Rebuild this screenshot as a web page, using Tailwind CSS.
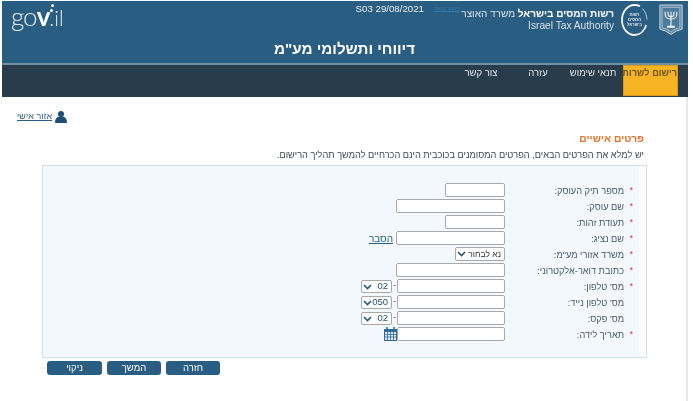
<!doctype html>
<html dir="rtl" lang="he">
  <head>
    <title>דיווחי ותשלומי מע"מ</title>
    <meta charset="UTF-8" />
    <script src="https://cdn.jsdelivr.net/npm/@tailwindcss/browser@4"></script>
  </head>
  <body class="bg-white font-['Liberation_Sans',Arial,sans-serif] text-[9.2px] text-[#4b5a68]">
    <div class="w-[686px] ml-auto mr-[5px] pt-px h-[401px] overflow-hidden blur-[0.35px]">
      <!-- header -->
      <header class="h-[64px] bg-[#2a5d82] border-b-2 border-[#6f8fa6] text-white">
        <div class="flex items-start h-[39px] pr-[5px] pt-[3px]">
          <svg class="w-[24px] h-[31px] shrink-0" viewBox="0 0 24 32" fill="none" stroke="#c4d1db" stroke-width="1">
            <path d="M.5 1h23v25l-6 2-5.500 3.500L6.500 28l-6-2z" fill="#6b91ab" />
            <path d="M3 3.500h18v21l-5 1.500-4 2.500L8 26l-5-1.500z" stroke="#a9bdcb" stroke-width="0.800" fill="#4d7b9a" />
            <path d="M12 8v15M6 8v3c0 3 3 4.500 6 4.500s6-1.500 6-4.500V8M9 8v3c0 1.500 1 2 3 2s3-.500 3-2V8" stroke="#f4f7f9" stroke-width="1.100" />
            <path d="M8 23.500h8" stroke="#f4f7f9" stroke-width="2" />
          </svg>
          <svg class="w-[27px] h-[32px] mr-[11px] shrink-0" viewBox="0 0 27 32" fill="none">
            <path d="M19 2.200C17.500 1.400 15.500 1 13.500 1 6.600 1 1 7.700 1 16s5.600 15 12.500 15c5.500 0 10-4.200 11.800-10" stroke="#f4f7f9" stroke-width="1.800" />
            <path d="M21.500 4.500c2.500 2.700 4.300 6.500 4.500 11" stroke="#b5c8d5" stroke-width="1" />
            <g fill="#dce6ec" font-size="4.200" text-anchor="middle" font-family="Liberation Sans" font-weight="700">
              <text x="13.500" y="12">רשות</text>
              <text x="13.500" y="17">המסים</text>
              <text x="13.500" y="22">בישראל</text>
            </g>
          </svg>
          <div class="mr-[7px] w-[144px] shrink-0 pt-[4px] text-[10px] leading-[12px] whitespace-nowrap">
            <p><span class="font-bold">רשות המסים בישראל</span> <span class="text-[#d6e1e9]">משרד האוצר</span></p>
            <p class="text-[#d6e1e9] text-[10.200px] text-right" dir="ltr">Israel Tax Authority</p>
          </div>
          <div class="mr-[10px] flex items-center h-[9px] whitespace-nowrap pt-[1px]">
            <span class="text-[5px] text-[#2f78b0] underline w-[36px]">נתוניך קישור</span>
            <span class="text-[9.700px] text-[#e8eff4]" dir="ltr">S03 29/08/2021</span>
          </div>
          <div class="mr-auto pl-[9px] flex items-start h-[31px] text-[#e4ecf1] font-['Lato',sans-serif] font-light text-[26px] leading-[24px] relative tracking-[-1px]" dir="ltr">
            <span>go<span class="font-bold text-white">v</span><span class="text-[21px] tracking-[0px]">.il</span></span>
            <span class="absolute left-[49px] top-[0px] w-[3px] h-[3px] rounded-full bg-white"></span>
            <span class="absolute left-[48px] top-[5px] w-[3px] h-[3px] rounded-full bg-white"></span>
          </div>
        </div>
        <h1 class="text-center text-[15.200px] leading-[18px] font-bold pr-[1px]">דיווחי ותשלומי מע"מ</h1>
      </header>

      <!-- menu -->
      <nav class="h-[32px] bg-[#283c4c] flex pr-[10px] text-[9.500px] text-[#dfe6eb] leading-[14px]">
        <a class="w-[55px] h-[31px] bg-[#f6b324] border border-[#d89b1c] text-center font-bold text-[9.200px] text-[#6d5212] whitespace-nowrap">רישום לשרות</a>
        <a class="w-[60px] text-center pt-px">תנאי שימוש</a>
        <a class="w-[50px] text-center pt-px">עזרה</a>
        <a class="w-[64px] text-center pt-px">צור קשר</a>
      </nav>

      <!-- content -->
      <main class="h-[304px] border-r-2 border-[#e6e7e8]">
        <div class="flex justify-end items-center pl-[15px] pt-[13px] gap-[3px] h-[26px]">
          <svg class="w-[12px] h-[12px]" viewBox="0 0 12 12" fill="#1f4f75">
            <circle cx="6" cy="3" r="3" />
            <path d="M0 12c0-4 1.500-6 4-6.500h4C10.500 6 12 8 12 12z" />
          </svg>
          <a class="text-[9px] text-[#2a5d82] underline leading-none">אזור אישי</a>
        </div>
        <h2 class="mt-[9px] pr-[42px] text-[10.300px] leading-[14px] font-bold text-[#e2752c]">פרטים אישיים</h2>
        <p class="mt-[2px] pr-[42px] text-[9.200px] leading-[14px] text-[#3f4a54]">יש למלא את הפרטים הבאים, הפרטים המסומנים בכוכבית הינם הכרחיים להמשך תהליך הרישום.</p>

        <section class="mt-[3px] mr-[39px] w-[605px] h-[193px] border border-[#cfdff0] bg-[#fafcff] pr-[7px]">
          <div class="h-full bg-[#f3f8fe] pt-[16px]">
            <div class="flex items-center h-[16px]">
              <span class="w-[10px] pr-[6px] pt-[2px] text-[#e2343a] text-[9px]">*</span>
              <label class="w-[124px] pr-[5px] pt-[3px]">מספר תיק העוסק:</label>
              <input class="w-[60px] h-[14px] bg-white border border-[#a8a8a8] rounded-[2px]" />
            </div>
            <div class="flex items-center h-[16px]">
              <span class="w-[10px] pr-[6px] pt-[2px] text-[#e2343a] text-[9px]">*</span>
              <label class="w-[124px] pr-[5px] pt-[3px]">שם עוסק:</label>
              <input class="w-[109px] h-[14px] bg-white border border-[#a8a8a8] rounded-[2px]" />
            </div>
            <div class="flex items-center h-[16px]">
              <span class="w-[10px] pr-[6px] pt-[2px] text-[#e2343a] text-[9px]">*</span>
              <label class="w-[124px] pr-[5px] pt-[3px]">תעודת זהות:</label>
              <input class="w-[60px] h-[14px] bg-white border border-[#a8a8a8] rounded-[2px]" />
            </div>
            <div class="flex items-center h-[16px]">
              <span class="w-[10px] pr-[6px] pt-[2px] text-[#e2343a] text-[9px]">*</span>
              <label class="w-[124px] pr-[5px] pt-[3px]">שם נציג:</label>
              <input class="w-[109px] h-[14px] bg-white border border-[#a8a8a8] rounded-[2px]" />
              <a class="mr-[3px] text-[10px] text-[#2a5d82] underline">הסבר</a>
            </div>
            <div class="flex items-center h-[16px]">
              <span class="w-[10px] pr-[6px] pt-[2px] text-[#e2343a] text-[9px]">*</span>
              <label class="w-[124px] pr-[5px] pt-[3px]">משרד אזורי מע"מ:</label>
              <div class="relative w-[50px] h-[14px]">
                <select class="appearance-none w-full h-full bg-white border border-[#a8a8a8] rounded-[2px] pr-[3px] text-[8.500px] leading-none text-[#333]"><option>נא לבחור</option></select>
                <svg class="absolute left-[2px] top-[4px] w-[9px] h-[6px]" viewBox="0 0 9 6" fill="none" stroke="#24557a" stroke-width="1.600"><path d="M1 1l3.500 3.500L8 1" /></svg>
              </div>
            </div>
            <div class="flex items-center h-[16px]">
              <span class="w-[10px] pr-[6px] pt-[2px] text-[#e2343a] text-[9px]">*</span>
              <label class="w-[124px] pr-[5px] pt-[3px]">כתובת דואר-אלקטרוני:</label>
              <input class="w-[109px] h-[14px] bg-white border border-[#a8a8a8] rounded-[2px]" />
            </div>
            <div class="flex items-center h-[16px]">
              <span class="w-[10px] pr-[6px] pt-[2px] text-[#e2343a] text-[9px]">*</span>
              <label class="w-[124px] pr-[5px] pt-[3px]">מס' טלפון:</label>
              <input class="w-[108px] h-[14px] bg-white border border-[#a8a8a8] rounded-[2px]" />
              <span class="w-[5px] text-center leading-none">-</span>
              <div class="relative w-[31px] h-[13px]">
                <select class="appearance-none w-full h-full bg-white border border-[#a8a8a8] rounded-[2px] pr-[3px] text-[9.500px] leading-none text-[#24557a]"><option>02</option></select>
                <svg class="absolute left-[2px] top-[4px] w-[9px] h-[6px]" viewBox="0 0 9 6" fill="none" stroke="#24557a" stroke-width="1.600"><path d="M1 1l3.500 3.500L8 1" /></svg>
              </div>
            </div>
            <div class="flex items-center h-[16px]">
              <span class="w-[10px]"></span>
              <label class="w-[124px] pr-[5px] pt-[3px]">מס' טלפון נייד:</label>
              <input class="w-[108px] h-[14px] bg-white border border-[#a8a8a8] rounded-[2px]" />
              <span class="w-[5px] text-center leading-none">-</span>
              <div class="relative w-[31px] h-[13px]">
                <select class="appearance-none w-full h-full bg-white border border-[#a8a8a8] rounded-[2px] pr-[3px] text-[9.500px] leading-none text-[#24557a]"><option>050</option></select>
                <svg class="absolute left-[2px] top-[4px] w-[9px] h-[6px]" viewBox="0 0 9 6" fill="none" stroke="#24557a" stroke-width="1.600"><path d="M1 1l3.500 3.500L8 1" /></svg>
              </div>
            </div>
            <div class="flex items-center h-[16px]">
              <span class="w-[10px]"></span>
              <label class="w-[124px] pr-[5px] pt-[3px]">מס' פקס:</label>
              <input class="w-[108px] h-[14px] bg-white border border-[#a8a8a8] rounded-[2px]" />
              <span class="w-[5px] text-center leading-none">-</span>
              <div class="relative w-[31px] h-[13px]">
                <select class="appearance-none w-full h-full bg-white border border-[#a8a8a8] rounded-[2px] pr-[3px] text-[9.500px] leading-none text-[#24557a]"><option>02</option></select>
                <svg class="absolute left-[2px] top-[4px] w-[9px] h-[6px]" viewBox="0 0 9 6" fill="none" stroke="#24557a" stroke-width="1.600"><path d="M1 1l3.500 3.500L8 1" /></svg>
              </div>
            </div>
            <div class="flex items-center h-[16px]">
              <span class="w-[10px] pr-[6px] pt-[2px] text-[#e2343a] text-[9px]">*</span>
              <label class="w-[124px] pr-[5px] pt-[3px]">תאריך לידה:</label>
              <input class="w-[108px] h-[14px] bg-white border border-[#a8a8a8] rounded-[2px]" />
              <svg class="w-[13px] h-[14px]" viewBox="0 0 13 14">
                <rect x="0" y="2" width="13" height="12" fill="#2f6b98" />
                <rect x="1" y="5" width="11" height="8" fill="#dfe9f2" />
                <path d="M3 0v3M10 0v3" stroke="#2f6b98" stroke-width="1.500" />
                <path d="M1 7.500h11M1 10h11M3.500 5v8M6.500 5v8M9.500 5v8" stroke="#2f6b98" stroke-width="0.800" />
              </svg>
            </div>
          </div>
        </section>

        <div class="mt-[3px] pl-[45px] flex justify-end gap-[5px] text-[9.500px] text-white">
          <button class="order-3 w-[55px] h-[14px] rounded-[3px] bg-[#2a5d82] leading-none">ניקוי</button>
          <button class="order-2 w-[54px] h-[14px] rounded-[3px] bg-[#2a5d82] leading-none">המשך</button>
          <button class="order-1 w-[54px] h-[14px] rounded-[3px] bg-[#2a5d82] leading-none">חזרה</button>
        </div>
      </main>
    </div>
  </body>
</html>
